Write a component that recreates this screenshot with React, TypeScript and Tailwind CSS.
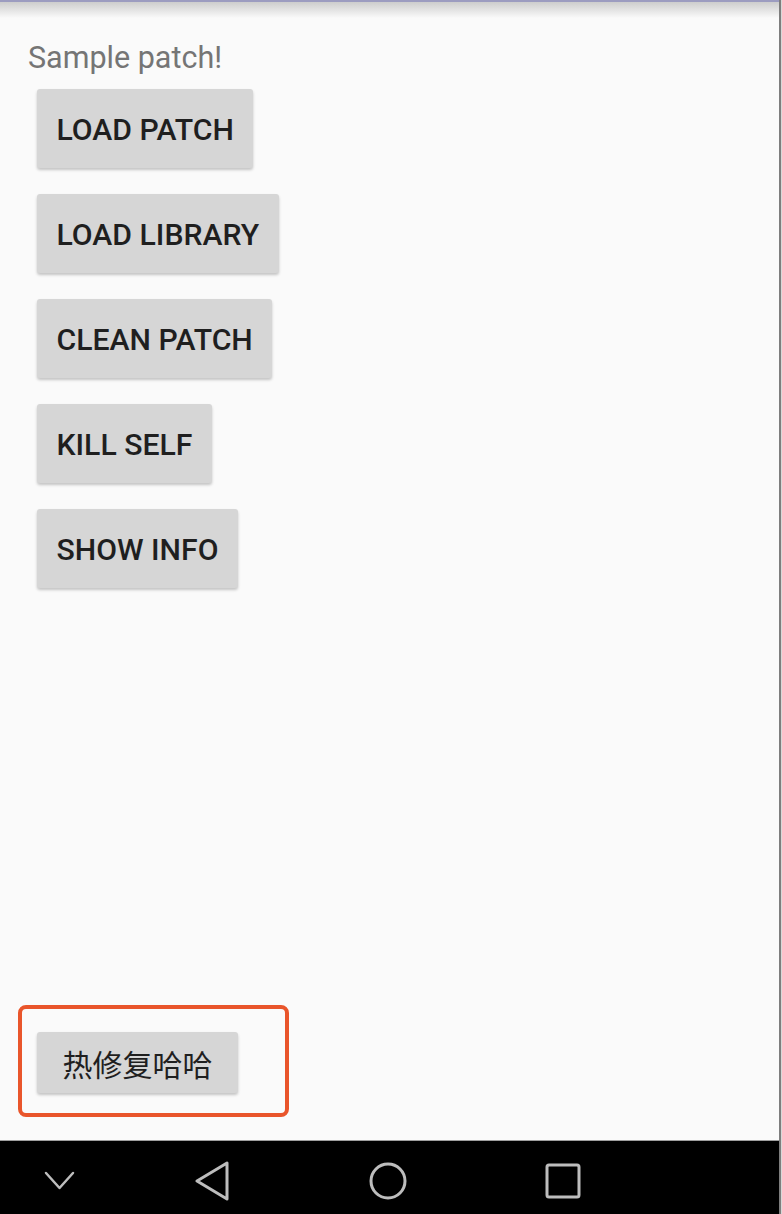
const buttons = ['LOAD PATCH', 'LOAD LIBRARY', 'CLEAN PATCH', 'KILL SELF', 'SHOW INFO'];

const NavBar = () => {
  return (
    <div className="flex items-start h-[74px] border-t border-[#9e9e9e] bg-black pt-[20px] pl-[40px]">
      <svg width="40" height="40" viewBox="0 0 40 40" fill="none" stroke="#bdbdbd" strokeWidth="2.5" strokeLinecap="round" strokeLinejoin="round">
        <polyline points="6,12 19.5,27 33,12" />
      </svg>
      <svg className="ml-[112px]" width="40" height="40" viewBox="0 0 40 40" fill="none" stroke="#bdbdbd" strokeWidth="3" strokeLinejoin="round">
        <polygon points="35,2 35,38 5,20" />
      </svg>
      <svg className="ml-[136px]" width="40" height="40" viewBox="0 0 40 40" fill="none" stroke="#bdbdbd" strokeWidth="3">
        <circle cx="20" cy="20" r="17" />
      </svg>
      <svg className="ml-[135px]" width="40" height="40" viewBox="0 0 40 40" fill="none" stroke="#bdbdbd" strokeWidth="3">
        <rect x="4" y="4" width="32" height="32" rx="2" />
      </svg>
    </div>
  );
};

const App: React.FC = () => {
  return (
    <div className="flex w-[782px] h-[1214px] bg-[#fafafa] font-['Roboto','Noto_Sans_CJK_SC',sans-serif]">
      <div className="flex flex-col w-[779px]">
        <div className="h-[2px] bg-[#9c9cc0]" />
        <div className="h-[16px] bg-gradient-to-b from-[#cdcdcd] to-[#fafafa]" />

        <div className="flex flex-col flex-1">
          <p className="pl-[28px] mt-[22px] text-[30.5px] leading-[35px] text-[#757575]">Sample patch!</p>

          <div className="flex flex-col items-start gap-[26px] pl-[37px] mt-[14px]">
            {buttons.map((b) => (
              <button key={b} className="h-[79px] px-[19.5px] pt-[2px] rounded-[3px] bg-[#d6d6d6] text-[30.2px] font-medium text-[#1f1f1f] shadow-[0_2px_3px_rgba(0,0,0,0.22)]">
                {b}
              </button>
            ))}
          </div>

          <div className="mt-auto mb-[23px] ml-[18px] w-[271px] h-[112px] rounded-[8px] border-4 border-[#e9552b] pl-[15px] pt-[23px]">
            <button className="h-[61px] w-[201px] pt-[2px] rounded-[3px] bg-[#d6d6d6] text-[30px] text-[#1f1f1f] shadow-[0_2px_3px_rgba(0,0,0,0.22)] font-['Noto_Sans_CJK_SC',sans-serif]">
              热修复哈哈
            </button>
          </div>
        </div>

        <NavBar />
      </div>
      <div className="w-[2px] bg-[#7e7e7e]" />
      <div className="w-[1px] bg-[#d8d8d8]" />
    </div>
  );
};

export default App;
